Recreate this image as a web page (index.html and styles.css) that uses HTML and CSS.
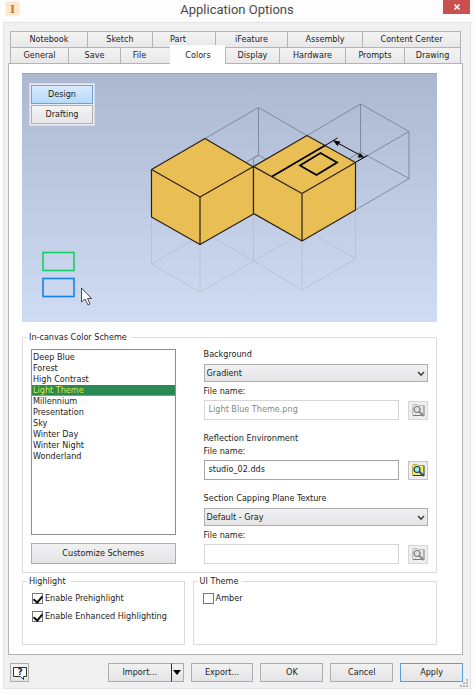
FILE: index.html
```
<!DOCTYPE html>
<html lang="en">
<head>
<meta charset="utf-8">
<title>Application Options</title>
<link rel="stylesheet" href="styles.css">
</head>
<body>
<svg width="0" height="0" class="defs" aria-hidden="true">
  <symbol id="browse" viewBox="0 0 14 14">
    <path class="folder" d="M1 3l1-2h4l1 1h6v10H1z"/>
    <path class="edge" d="M1.500 12.500v-9l1-2h3.500l1 1h6"/>
    <path class="shade" d="M13 2.500v10H2"/>
    <circle class="lens" cx="6" cy="6.500" r="3"/>
    <path class="handle" d="M8.500 9l4.500 4"/>
  </symbol>
</svg>
<main class="window">
  <header class="titlebar">
    <span class="logo">I</span>
    <h1>Application Options</h1>
    <button class="close" aria-label="Close"><svg viewBox="0 0 8 8"><path d="M1.500 1.500l5 5M6.500 1.500l-5 5"/></svg></button>
  </header>
  <div class="body">
    <nav class="tabs">
      <div class="row first">
        <button>Notebook</button><button>Sketch</button><button class="slack">Part</button><button>iFeature</button><button>Assembly</button><button>Content Center</button>
      </div>
      <div class="row second">
        <button>General</button><button>Save</button><button class="slack">File</button><button class="active">Colors</button><button>Display</button><button>Hardware</button><button>Prompts</button><button>Drawing</button>
      </div>
    </nav>
    <section class="panel">
      <div class="preview">
        <svg viewBox="22 73 415 249" class="scene" role="img" aria-label="Color scheme preview">
          <defs>
            <linearGradient id="sky" x1="0" y1="0" x2="0" y2="1"><stop offset="0" stop-color="#abb8d0"/><stop offset="1" stop-color="#cfdcf3"/></linearGradient>
          </defs>
          <rect x="22" y="73" width="415" height="249" fill="url(#sky)"/>
          <path d="M22 73.500h415" stroke="#98a3b7"/>
          <g class="below">
            <path d="M151.500 217v47l48.500 28 54-31 48 29 53.500-31v-49M200 244v48M253.500 214v47M302 241v49M151.500 264l54-31 48 28M253.500 261l54-31 48 29"/>
          </g>
          <g class="wire">
            <path d="M205 138.500l53.500-31 48.500 28M258.500 107.500v47.500M253.500 167v-8.500l5-3.500 48.500 28M205 186l53.500-31M307 135.500l53.500-31.500 48.500 27.500v47l-53.500 31.500M360.500 104v48l48.500 26.500M355.500 162.500l53.500-31M307 183l53.500-31"/>
          </g>
          <g class="solid">
            <path d="M151.500 169.500l53.500-31 48.500 28.500v47L200 244.500l-48.500-27.500z"/>
            <path d="M151.500 169.500L200 197l53.500-30.500M200 197v47.500"/>
            <path d="M253.500 166.500l53.500-31 48.500 27v47.500L302 241l-48.500-27.500z"/>
            <path d="M253.500 166.500L302 193.500l53.500-31M302 193.500V241"/>
          </g>
          <path class="sketch" d="M272 176.500l53-31"/>
          <path class="sketch" d="M300 165.500l20.500-12.500 16.500 9.500-20.500 12.500z"/>
          <path class="dim" d="M325 145.500l12.500-7.500M356 162l11.500-6.500M334 141l29.500 16"/>
          <path d="M333 140.500l7.500 1-3 4.500zM364.500 157.500l-4.500-4.500-2.500 4.500z"/>
          <rect x="43" y="252.500" width="31" height="18" class="box green"/>
          <rect x="43" y="278.500" width="31" height="18" class="box blue"/>
          <path d="M81.500 288v14l3.500-3 3 6 2-1-2.500-5.500h4z" fill="#fff" stroke="#222" stroke-width=".8"/>
        </svg>
        <div class="modes"><button class="on">Design</button><button>Drafting</button></div>
      </div>
      <fieldset class="scheme">
        <legend>In-canvas Color Scheme</legend>
        <div class="left">
          <select class="list" size="10" aria-label="Color scheme">
            <option>Deep Blue</option><option>Forest</option><option>High Contrast</option><option selected>Light Theme</option><option>Millennium</option><option>Presentation</option><option>Sky</option><option>Winter Day</option><option>Winter Night</option><option>Wonderland</option>
          </select>
          <button class="btn custom">Customize Schemes</button>
        </div>
        <div class="right">
          <div class="group">
            <label for="bg">Background</label>
            <div class="combo"><select id="bg"><option>Gradient</option></select><svg viewBox="0 0 8 6"><path d="M1 1l3 3 3-3"/></svg></div>
            <label for="f1">File name:</label>
            <div class="file"><input id="f1" type="text" value="Light Blue Theme.png" disabled><button class="browse" disabled aria-label="Browse"><svg><use href="#browse"/></svg></button></div>
          </div>
          <div class="group">
            <label for="f2">Reflection Environment</label>
            <label for="f2">File name:</label>
            <div class="file"><input id="f2" type="text" value="studio_02.dds"><button class="browse" aria-label="Browse"><svg><use href="#browse"/></svg></button></div>
          </div>
          <div class="group">
            <label for="tex">Section Capping Plane Texture</label>
            <div class="combo"><select id="tex"><option>Default - Gray</option></select><svg viewBox="0 0 8 6"><path d="M1 1l3 3 3-3"/></svg></div>
            <label for="f3">File name:</label>
            <div class="file"><input id="f3" type="text" disabled><button class="browse" disabled aria-label="Browse"><svg><use href="#browse"/></svg></button></div>
          </div>
        </div>
      </fieldset>
      <div class="pair">
        <fieldset>
          <legend>Highlight</legend>
          <label class="check"><input type="checkbox" checked>Enable Prehighlight</label>
          <label class="check"><input type="checkbox" checked>Enable Enhanced Highlighting</label>
        </fieldset>
        <fieldset>
          <legend>UI Theme</legend>
          <label class="check"><input type="checkbox">Amber</label>
        </fieldset>
      </div>
    </section>
    <footer>
      <button class="btn help" aria-label="Help"><svg viewBox="0 0 14 14"><path d="M.5 1.500h13v9h-3v3l-3-3h-7z"/><text x="7" y="9">?</text></svg></button>
      <div class="split"><button class="btn">Import...</button><button class="btn drop" aria-label="Import menu"><svg viewBox="0 0 8 5"><path d="M0 0h8L4 5z"/></svg></button></div>
      <button class="btn">Export...</button>
      <button class="btn">OK</button>
      <button class="btn">Cancel</button>
      <button class="btn primary">Apply</button>
      <svg class="grip" viewBox="0 0 8 8"><path d="M6 0h2v2H6zM3 3h2v2H3zM6 3h2v2H6zM0 6h2v2H0zM3 6h2v2H3zM6 6h2v2H6z"/></svg>
    </footer>
  </div>
</main>
</body>
</html>
```
FILE: styles.css
```
* { box-sizing: border-box; }
body {
  margin: 0;
  background: #fdfdfd;
  color: #1c1c1c;
  font: 9px/11px "DejaVu Sans Condensed", "DejaVu Sans", sans-serif;
}
button, input, select { font: inherit; color: inherit; margin: 0; border-radius: 0; }
button { padding: 0; }
svg { display: block; }
.defs { position: absolute; }
.window { padding: 0 3px 5px; }

.titlebar { position: relative; height: 22px; display: flex; justify-content: center; }
h1 { margin: 0; font: 13px/20px Roboto, sans-serif; color: #4a4a4a; }
.logo {
  position: absolute; left: 3px; top: 2px; width: 13px; height: 13px;
  background: #fde6cc; box-shadow: 0 0 2px #fde6cc; color: #c8782a; text-align: center;
  font: bold 13px/14px "Liberation Serif", serif;
}
.close {
  position: absolute; right: 1px; top: 0; width: 27px; height: 14px;
  display: grid; place-items: center; border: 0; background: #c9504c;
}
.close svg { width: 8px; height: 8px; fill: none; stroke: #fff; stroke-width: 1.600; }

.body { background: #f0f0f1; border: 1px solid #e2e2e4; padding: 8px 7px 6px 4px; }

.tabs { padding: 0 2px; }
.row { display: grid; }
.first { grid-template-columns: 77fr 65fr 63fr 72fr 75fr 99fr; }
.second { grid-template-columns: 58fr 52fr 50fr 55fr 54fr 66fr 59fr 57fr; }
.row button {
  height: 16px; border: 1px solid #b4b4b6; border-width: 1px 0 0 1px;
  background: linear-gradient(#f3f3f3, #e8e8ea); line-height: 15px;
}
.row button:last-child { border-right-width: 1px; }
.row .slack { padding-right: 12px; }
.row .active {
  position: relative; height: 19px; margin: -2px 0 -1px;
  background: #fff; border-color: #fff;
}

.panel { background: #fff; border: 1px solid #b4b4b6; padding: 9px 25px 9px 13px; }
.preview { position: relative; }
.scene { width: 100%; }
.scene .below path { fill: none; stroke: #b5bfcb; stroke-width: .8; }
.scene .wire path { fill: none; stroke: #717c90; stroke-width: .8; }
.scene .solid path { fill: #e9bf55; stroke: #2a2115; stroke-width: 1.200; stroke-linejoin: round; }
.scene .solid path:nth-child(even) { fill: none; }
.scene .sketch { fill: none; stroke: #000; stroke-width: 1.800; }
.scene .dim { fill: none; stroke: #000; stroke-width: 1; }
.box { fill: none; stroke-width: 1.600; }
.green { stroke: #14cf66; }
.blue { stroke: #1583e4; }
.modes {
  position: absolute; left: 7px; top: 10px; width: 66px; padding: 1px;
  display: grid; gap: 1px; background: #e9edf3; border: 1px solid #d5dbe5;
}
.modes button { height: 19px; border: 1px solid #b0b0b4; background: linear-gradient(#f3f3f3, #e6e6e8); }
.modes .on { border-color: #6ba3d8; background: linear-gradient(#d8ebfd, #b5dafb); }

fieldset { margin: 0; min-width: 0; border: 1px solid #dcdcdc; padding: 0 8px; }
legend { padding: 0 4px 0 2px; margin-left: -4px; }
.scheme { margin-top: 10px; display: grid; grid-template-columns: 145fr 225fr; column-gap: 28px; padding-bottom: 8px; }
.left { padding-top: 6px; display: flex; flex-direction: column; gap: 8px; }
.list { flex: 1; width: 100%; border: 1px solid #8c8c90; padding: 2px 0; overflow: hidden; background: #fff; outline: 0; }
.list option { padding: 0 1px; min-height: 11px; line-height: 11px; }
.list option:checked {
  background: #2a8a55 linear-gradient(#2a8a55, #2a8a55);
  border-bottom: 1px solid #4aa5e8;
  line-height: 10px;
  -webkit-text-fill-color: #d8e640;
}
.btn { border: 1px solid #adadb0; background: linear-gradient(#f1f1f2, #e4e4e6); height: 19px; }
.custom { height: 21px; }

.right { padding-top: 5px; display: flex; flex-direction: column; gap: 12px; }
.right label { display: block; line-height: 13px; }
.combo { position: relative; margin: 3px 0; }
.combo select {
  display: block; width: 100%; height: 18px; appearance: none; padding: 0 2px;
  border: 1px solid #adadb0; background: linear-gradient(#f1f1f2, #e4e4e6);
}
.combo svg { position: absolute; right: 3px; top: 7px; width: 8px; height: 6px; fill: none; stroke: #444; stroke-width: 1.600; pointer-events: none; }
.file { display: flex; align-items: center; gap: 9px; margin-top: 2px; }
.file input { flex: 1; min-width: 0; height: 20px; padding: 0 4px 2px; border: 1px solid #a6a6aa; background: #fff; }
.file input:disabled { border-color: #d6d6d8; color: #858585; }
.browse { width: 20px; height: 19px; display: grid; place-items: center; border: 1px solid #c4c4c8; background: #efeff0; }
.browse svg { width: 14px; height: 14px; }
.folder { fill: #f3e86a; }
.edge { fill: none; stroke: #b9a83a; }
.shade { fill: none; stroke: #33331c; }
.lens { fill: #8ff0ee; stroke: #1f3350; stroke-width: 1.200; }
.handle { stroke: #1e4ea8; stroke-width: 2; }
.browse:disabled { border-color: #d6d6d8; }
.browse:disabled svg { filter: grayscale(1); opacity: .6; }

.pair { display: grid; grid-template-columns: 163fr 245fr; gap: 8px; margin-top: 3px; }
.pair fieldset { height: 69px; padding: 0 9px; }
.pair legend { margin-left: -5px; }
.check { display: flex; align-items: center; gap: 2px; height: 12px; margin: 5px 0 6px; white-space: nowrap; }
.check input { appearance: none; width: 11px; height: 11px; border: 1px solid #77777a; background: #fff; display: grid; place-items: center; }
.check input:checked::after { content: ""; width: 4px; height: 7px; border: solid #111; border-width: 0 2px 2px 0; transform: rotate(40deg); margin-bottom: 2px; }

footer { position: relative; display: grid; grid-template-columns: 19px 65fr 76fr 63fr 63fr 63fr 63fr; column-gap: 7px; padding: 8px 0 0 2px; }
.help { display: grid; place-items: center; }
.help svg { width: 14px; height: 14px; fill: #fff; stroke: #333; }
.help text { font: bold 9px "DejaVu Sans", sans-serif; text-anchor: middle; fill: #223; stroke: none; }
.split { grid-column: 3; display: flex; }
.split .btn:first-child { flex: 1; border-right: 0; }
.drop { width: 13px; border-left-color: #333; display: grid; place-items: center; }
.drop svg { width: 8px; height: 5px; }
.primary { border-color: #5c9fd6; }
.grip { position: absolute; right: -5px; bottom: -5px; width: 8px; height: 8px; fill: #b8b8bc; }
```
